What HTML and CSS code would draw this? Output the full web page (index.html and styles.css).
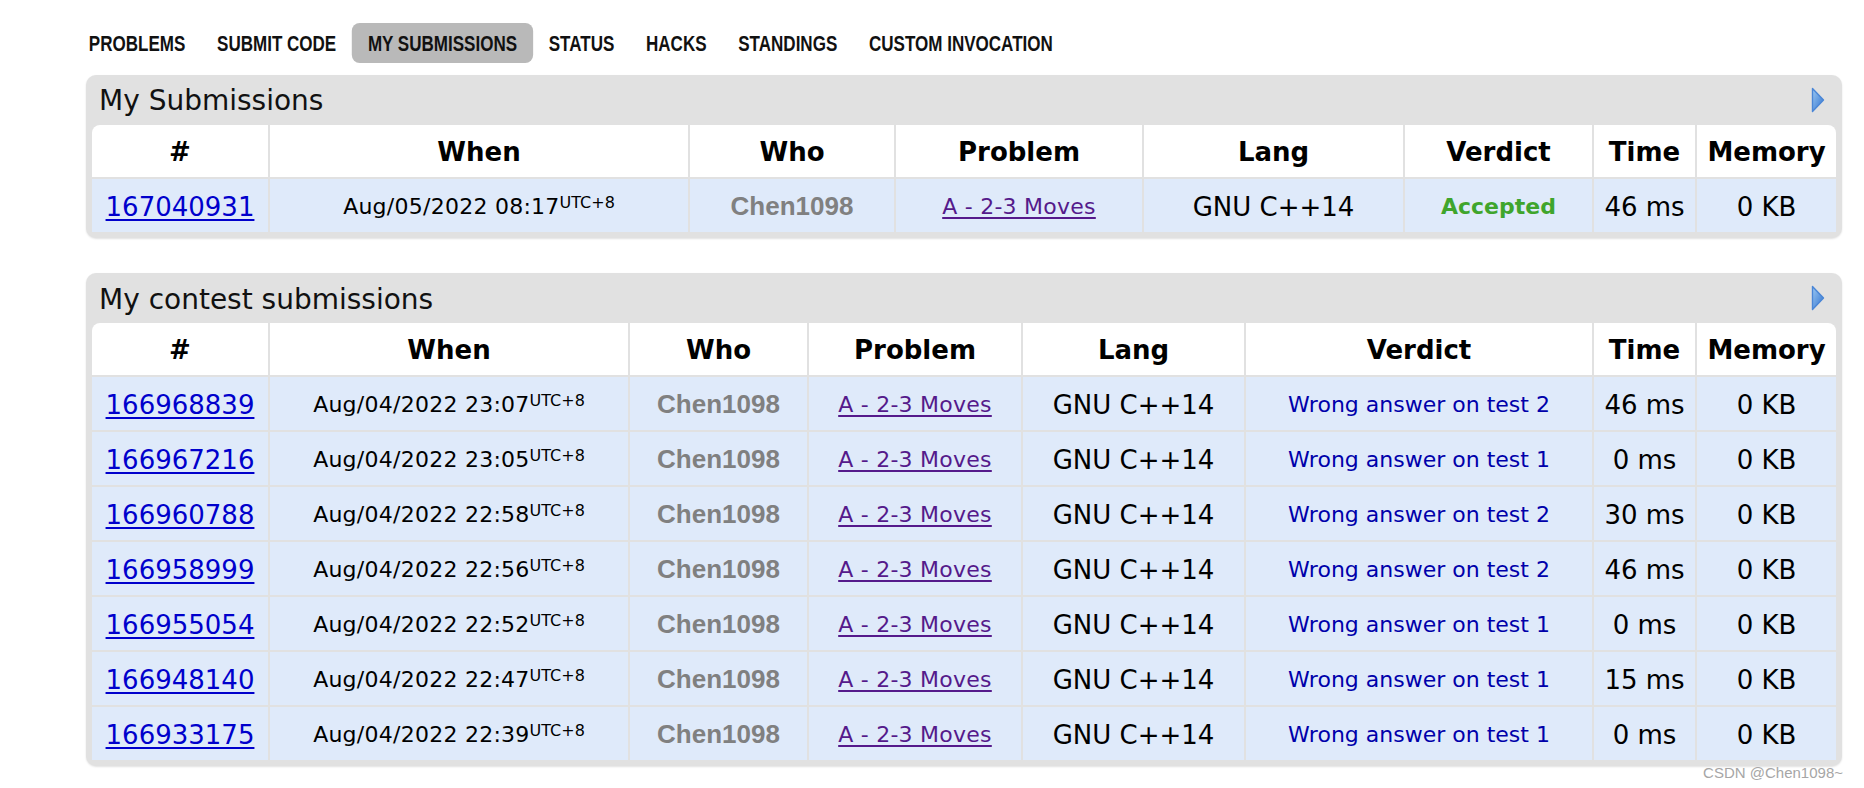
FILE: index.html
```html
<!DOCTYPE html>
<html>
<head>
<meta charset="utf-8">
<link rel="stylesheet" href="styles.css">
</head>
<body>
<nav class="menu">
  <a class="menu-item">Problems</a>
  <a class="menu-item">Submit Code</a>
  <a class="menu-item active">My Submissions</a>
  <a class="menu-item">Status</a>
  <a class="menu-item">Hacks</a>
  <a class="menu-item">Standings</a>
  <a class="menu-item">Custom Invocation</a>
</nav>

<section class="box box-first">
  <div class="caption">
    <span>My Submissions</span>
    <svg class="play" width="14" height="26" viewBox="0 0 14 26"><defs><linearGradient id="g1" x1="0" y1="0" x2="1" y2="1"><stop offset="0" stop-color="#9cc8f2"/><stop offset="1" stop-color="#2f72cf"/></linearGradient></defs><polygon points="1.5,1.5 12.5,13 1.5,24.5" fill="url(#g1)" stroke="#4a86d6" stroke-width="1.4" stroke-linejoin="round"/></svg>
  </div>
  <table class="status">
    <colgroup>
      <col class="c-id"><col class="c-when1"><col class="c-who1"><col class="c-prob1"><col class="c-lang1"><col class="c-verd1"><col class="c-time"><col class="c-mem">
    </colgroup>
    <thead>
      <tr><th>#</th><th>When</th><th>Who</th><th>Problem</th><th>Lang</th><th>Verdict</th><th>Time</th><th>Memory</th></tr>
    </thead>
    <tbody>
      <tr><td><a class="sid">167040931</a></td><td class="small">Aug/05/2022 08:17<sup>UTC+8</sup></td><td class="who">Chen1098</td><td class="small"><a class="prob">A - 2-3 Moves</a></td><td>GNU C++14</td><td class="small ok">Accepted</td><td>46&nbsp;ms</td><td>0&nbsp;KB</td></tr>
    </tbody>
  </table>
</section>

<section class="box box-second">
  <div class="caption">
    <span>My contest submissions</span>
    <svg class="play" width="14" height="26" viewBox="0 0 14 26"><defs><linearGradient id="g2" x1="0" y1="0" x2="1" y2="1"><stop offset="0" stop-color="#9cc8f2"/><stop offset="1" stop-color="#2f72cf"/></linearGradient></defs><polygon points="1.5,1.5 12.5,13 1.5,24.5" fill="url(#g2)" stroke="#4a86d6" stroke-width="1.4" stroke-linejoin="round"/></svg>
  </div>
  <table class="status">
    <colgroup>
      <col class="c-id"><col class="c-when2"><col class="c-who2"><col class="c-prob2"><col class="c-lang2"><col class="c-verd2"><col class="c-time"><col class="c-mem">
    </colgroup>
    <thead>
      <tr><th>#</th><th>When</th><th>Who</th><th>Problem</th><th>Lang</th><th>Verdict</th><th>Time</th><th>Memory</th></tr>
    </thead>
    <tbody>
      <tr><td><a class="sid">166968839</a></td><td class="small">Aug/04/2022 23:07<sup>UTC+8</sup></td><td class="who">Chen1098</td><td class="small"><a class="prob">A - 2-3 Moves</a></td><td>GNU C++14</td><td class="small wa">Wrong answer on test 2</td><td>46&nbsp;ms</td><td>0&nbsp;KB</td></tr>
      <tr><td><a class="sid">166967216</a></td><td class="small">Aug/04/2022 23:05<sup>UTC+8</sup></td><td class="who">Chen1098</td><td class="small"><a class="prob">A - 2-3 Moves</a></td><td>GNU C++14</td><td class="small wa">Wrong answer on test 1</td><td>0&nbsp;ms</td><td>0&nbsp;KB</td></tr>
      <tr><td><a class="sid">166960788</a></td><td class="small">Aug/04/2022 22:58<sup>UTC+8</sup></td><td class="who">Chen1098</td><td class="small"><a class="prob">A - 2-3 Moves</a></td><td>GNU C++14</td><td class="small wa">Wrong answer on test 2</td><td>30&nbsp;ms</td><td>0&nbsp;KB</td></tr>
      <tr><td><a class="sid">166958999</a></td><td class="small">Aug/04/2022 22:56<sup>UTC+8</sup></td><td class="who">Chen1098</td><td class="small"><a class="prob">A - 2-3 Moves</a></td><td>GNU C++14</td><td class="small wa">Wrong answer on test 2</td><td>46&nbsp;ms</td><td>0&nbsp;KB</td></tr>
      <tr><td><a class="sid">166955054</a></td><td class="small">Aug/04/2022 22:52<sup>UTC+8</sup></td><td class="who">Chen1098</td><td class="small"><a class="prob">A - 2-3 Moves</a></td><td>GNU C++14</td><td class="small wa">Wrong answer on test 1</td><td>0&nbsp;ms</td><td>0&nbsp;KB</td></tr>
      <tr><td><a class="sid">166948140</a></td><td class="small">Aug/04/2022 22:47<sup>UTC+8</sup></td><td class="who">Chen1098</td><td class="small"><a class="prob">A - 2-3 Moves</a></td><td>GNU C++14</td><td class="small wa">Wrong answer on test 1</td><td>15&nbsp;ms</td><td>0&nbsp;KB</td></tr>
      <tr><td><a class="sid">166933175</a></td><td class="small">Aug/04/2022 22:39<sup>UTC+8</sup></td><td class="who">Chen1098</td><td class="small"><a class="prob">A - 2-3 Moves</a></td><td>GNU C++14</td><td class="small wa">Wrong answer on test 1</td><td>0&nbsp;ms</td><td>0&nbsp;KB</td></tr>
    </tbody>
  </table>
</section>

<div class="watermark">CSDN @Chen1098~</div>
</body>
</html>
```

FILE: styles.css
```css
html, body {
  margin: 0;
  padding: 0;
  background: #ffffff;
}

body {
  width: 1864px;
  height: 788px;
  position: relative;
  overflow: hidden;
  font-family: "DejaVu Sans", Verdana, sans-serif;
  color: #000;
}

/* condensed menu: Liberation Sans Bold narrowed horizontally */
.menu {
  display: flex;
  margin-left: 73px;
  padding-top: 23px;
  height: 40px;
  transform: scaleX(0.792);
  transform-origin: 0 0;
}

.menu-item {
  display: block;
  height: 40px;
  line-height: 42px;
  padding: 0 20px;
  font-family: "Liberation Sans", Arial, sans-serif;
  font-weight: bold;
  font-size: 21.5px;
  text-transform: uppercase;
  color: #111;
  border-radius: 10px / 8px;
  white-space: nowrap;
}

.menu-item.active {
  background: #b9b9b9;
}

.box {
  margin-left: 86px;
  width: 1756px;
  box-sizing: border-box;
  background: #e1e1e1;
  border-radius: 10px;
  padding: 0 6px 6px 6px;
  box-shadow: 0 1px 2px rgba(0, 0, 0, 0.12);
}

.box-first {
  margin-top: 12px;
}

.box-second {
  margin-top: 35px;
}

.caption {
  display: flex;
  justify-content: space-between;
  align-items: flex-start;
  height: 50px;
  padding-left: 7px;
  padding-right: 11px;
}

.caption span {
  font-size: 28px;
  line-height: 46px;
  padding-top: 3px;
  color: #111;
}

.box-second .caption span {
  padding-top: 4px;
}

.play {
  margin-top: 12px;
}

.status {
  width: 1744px;
  table-layout: fixed;
  border-collapse: separate;
  border-spacing: 0;
}

.c-id { width: 178px; }
.c-when1 { width: 420px; }
.c-who1 { width: 206px; }
.c-prob1 { width: 248px; }
.c-lang1 { width: 261px; }
.c-verd1 { width: 189px; }
.c-time { width: 103px; }
.c-mem { width: 139px; }

.c-when2 { width: 360px; }
.c-who2 { width: 179px; }
.c-prob2 { width: 214px; }
.c-lang2 { width: 223px; }
.c-verd2 { width: 348px; }

.status th {
  background: #ffffff;
  height: 50px;
  padding: 2px 0 0 0;
  font-size: 26px;
  font-weight: bold;
  text-align: center;
  border-right: 2px solid #e1e1e1;
  white-space: nowrap;
}

.status th:first-child {
  border-top-left-radius: 8px;
}

.status th:last-child {
  border-top-right-radius: 8px;
  border-right: none;
}

.status td {
  background: #dfeafa;
  height: 51px;
  padding: 2px 0 0 0;
  font-size: 26px;
  text-align: center;
  vertical-align: middle;
  border-top: 2px solid #e1e1e1;
  border-right: 2px solid #e1e1e1;
  white-space: nowrap;
}

.status td:last-child {
  border-right: none;
}

.status td.small {
  font-size: 22px;
  letter-spacing: 0.25px;
}

.status sup {
  font-size: 16px;
  vertical-align: 6px;
  line-height: 0;
  letter-spacing: 0;
}

.sid {
  color: #0000cc;
  text-decoration: underline;
  text-underline-offset: 3px;
}

.prob {
  color: #551a8b;
  text-decoration: underline;
  text-underline-offset: 3px;
}

.status td.who {
  font-family: "Liberation Sans", Arial, sans-serif;
  font-weight: bold;
  font-size: 26px;
  color: #808080;
}

.status td.ok {
  color: #3fa52c;
  font-weight: bold;
  letter-spacing: 0;
}

.status td.wa {
  color: #0000aa;
  letter-spacing: 0;
}

.watermark {
  position: absolute;
  right: 21px;
  bottom: 7px;
  font-family: "Liberation Sans", Arial, sans-serif;
  font-size: 15px;
  color: #a6a6a6;
}
```
